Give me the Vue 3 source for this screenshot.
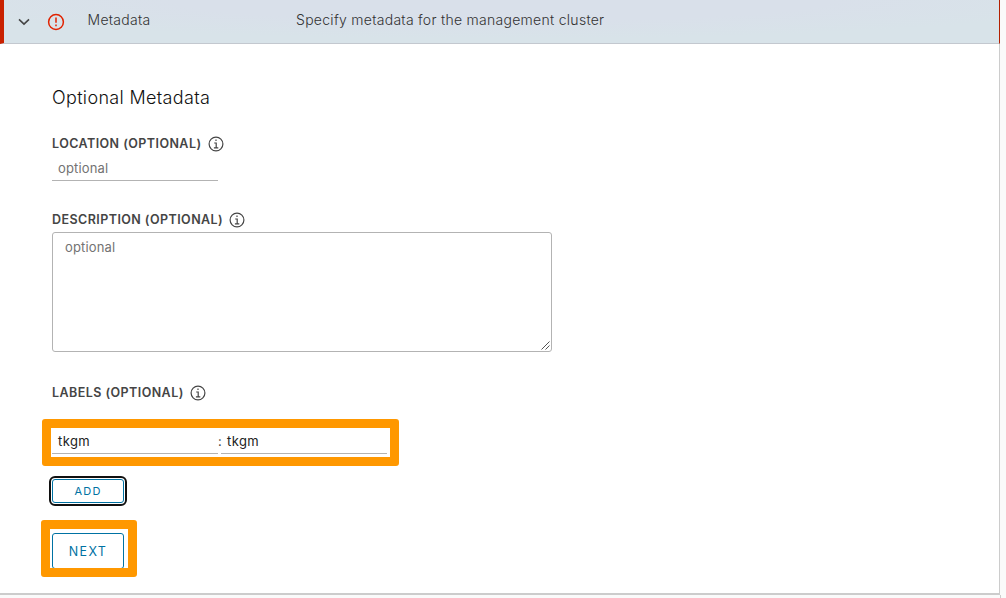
<script setup>
const labels = [{ key: 'tkgm', value: 'tkgm' }]
</script>

<template>
  <div class="page">
    <section class="panel">
      <header class="head">
        <svg class="chevron" width="14" height="10" viewBox="0 0 14 10"><path d="M2 2.3 7 7.1 12 2.3" /></svg>
        <svg class="error" width="18" height="18" viewBox="0 0 18 18">
          <circle cx="9" cy="9" r="7.4" />
          <path d="M9 4.6v5.2M9 11.4v1.8" />
        </svg>
        <span class="title">Metadata</span>
        <span class="summary">Specify metadata for the management cluster</span>
      </header>
      <div class="body">
        <h3>Optional Metadata</h3>
        <div class="label loc"><span>LOCATION (OPTIONAL)</span>
          <svg class="info" width="16" height="16" viewBox="0 0 16 16"><circle cx="8" cy="8" r="6.9" /><path d="M8 3.5v1.6M6.2 7H8.2v4.7M5.9 11.9h4.4" /></svg>
        </div>
        <div class="field">optional</div>
        <div class="label desc"><span>DESCRIPTION (OPTIONAL)</span>
          <svg class="info" width="16" height="16" viewBox="0 0 16 16"><circle cx="8" cy="8" r="6.9" /><path d="M8 3.5v1.6M6.2 7H8.2v4.7M5.9 11.9h4.4" /></svg>
        </div>
        <div class="area"><span>optional</span>
          <svg class="grip" width="9" height="9" viewBox="0 0 9 9"><path d="M.5 8.5l8-8M4.5 8.5l4-4" /></svg>
        </div>
        <div class="label labs"><span>LABELS (OPTIONAL)</span>
          <svg class="info" width="16" height="16" viewBox="0 0 16 16"><circle cx="8" cy="8" r="6.9" /><path d="M8 3.5v1.6M6.2 7H8.2v4.7M5.9 11.9h4.4" /></svg>
        </div>
        <div v-for="l in labels" :key="l.key" class="pair">
          <div class="field entry">{{ l.key }}</div><span class="colon">:</span><div class="field entry">{{ l.value }}</div>
          <div class="mark mark-pair"></div>
        </div>
        <button class="add">ADD</button>
        <div class="next-wrap">
          <button class="next">NEXT</button>
          <div class="mark mark-next"></div>
        </div>
      </div>
    </section>
  </div>
</template>

<style>
body { overflow: hidden; background: #fafafa; }
</style>
<style scoped>
* { box-sizing: border-box; }
.page { width: 1006px; height: 598px; background: #fafafa; font-family: Inter, "Open Sans", sans-serif; color: #454545; overflow: hidden; }
.page::after { content: ""; display: block; width: 1000px; height: 3px; border-right: 1px solid #ccc; }
.panel { width: 1000px; height: 595px; background: #fff; border-bottom: 2px solid #ccc; }
.head { display: flex; align-items: flex-start; height: 44px; border-left: 4px solid #c92100; border-right: 1px solid #b32000; border-bottom: 1px solid #c3c8cf; background: radial-gradient(ellipse 60% 90% at 50% 0, #d9e0ea 55%, #d8e3e9 100%); }
.chevron { margin: 17px 0 0 13px; fill: none; stroke: #454545; stroke-width: 1.6; }
.error { margin: 13px 0 0 16px; fill: none; stroke: #e12200; stroke-width: 1.5; }
.title { width: 208.5px; margin: 10px 0 0 22.5px; font-size: 14px; line-height: 20px; font-weight: 300; color: #333; letter-spacing: .28px; white-space: nowrap; }
.summary { margin-top: 10px; font-size: 14px; line-height: 20px; font-weight: 300; color: #333; letter-spacing: .28px; white-space: nowrap; }
.body { height: 549px; padding: 42px 0 0 52px; border-right: 1px solid #ccc; }
h3 { margin: 0; height: 24px; font-size: 18px; line-height: 24px; font-weight: 300; letter-spacing: .33px; color: #111; white-space: nowrap; }
.label { display: flex; align-items: center; gap: 6px; height: 16px; font-size: 12.5px; line-height: 16px; font-weight: 600; letter-spacing: .44px; white-space: nowrap; }
.loc { margin-top: 26px; }
.desc { margin-top: 31px; }
.labs { margin-top: 33px; }
.info { flex: none; fill: none; stroke: #454545; stroke-width: 1.2; }
.field { width: 166px; height: 29px; padding: 6px 0 0 6px; border-bottom: 1px solid #b3b3b3; font-size: 13px; line-height: 20px; letter-spacing: .15px; color: #737373; }
.area { position: relative; width: 500px; height: 120px; margin-top: 4px; padding: 4px 12px; border: 1px solid #b3b3b3; border-radius: 3px; font-size: 13px; line-height: 20px; letter-spacing: .15px; color: #737373; }
.grip { position: absolute; right: 1px; bottom: 1px; fill: none; stroke: #555; stroke-width: 1; }
.pair { position: relative; display: flex; width: 336px; height: 29px; margin-top: 24px; }
.entry { color: #222; letter-spacing: .4px; }
.colon { width: 3px; padding-top: 6px; font-size: 13px; line-height: 20px; }
.mark { position: absolute; border: 9px solid #ff9800; border-radius: 3px; pointer-events: none; }
.mark-pair { left: -10px; top: -6px; width: 357px; height: 47px; }
button { display: block; padding: 0; border: 1px solid #0072a3; border-radius: 3px; background: #fff; color: #0072a3; font-family: Inter, "Open Sans", sans-serif; text-align: center; }
.add { width: 72px; height: 24px; margin-top: 25px; outline: 2px solid #101010; outline-offset: 1px; font-size: 11px; line-height: 23px; letter-spacing: 1.2px; }
.next-wrap { position: relative; width: 72px; margin-top: 30px; }
.next { width: 72px; height: 36px; font-size: 12.5px; line-height: 35px; letter-spacing: 1.4px; }
.mark-next { left: -11px; top: -13px; width: 96px; height: 57px; }
</style>
